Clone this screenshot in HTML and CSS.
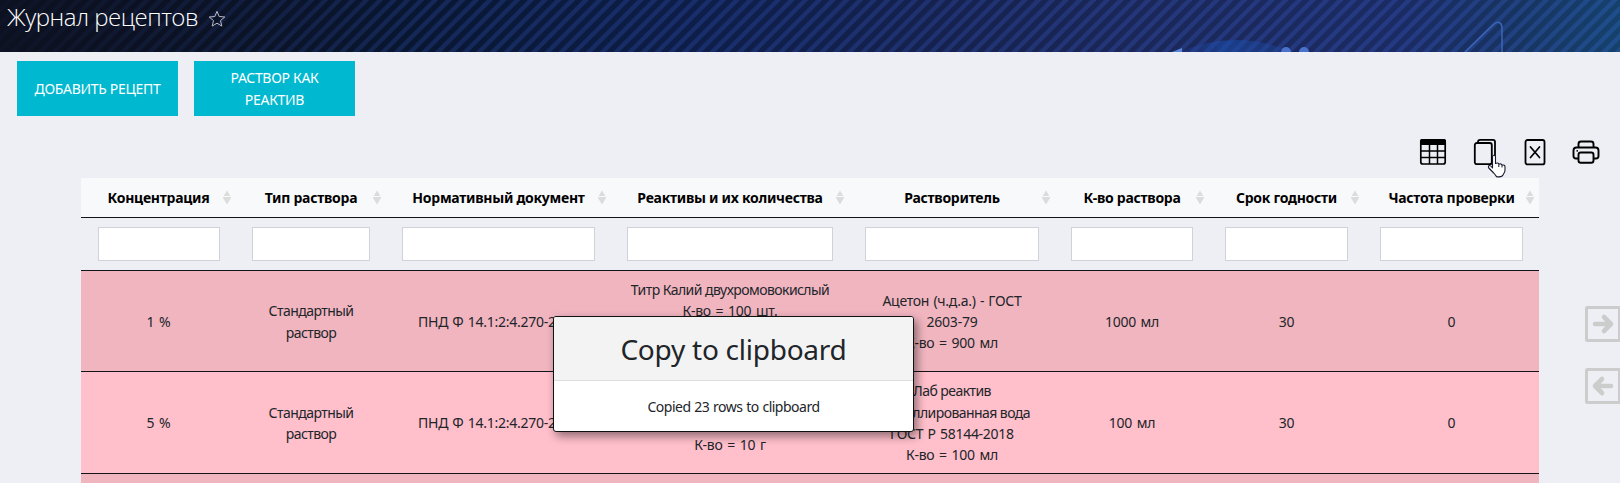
FILE: index.html
```html
<!DOCTYPE html>
<html lang="ru">
<head>
<meta charset="utf-8">
<title>Журнал рецептов</title>
<link rel="stylesheet" href="styles.css">
</head>
<body>
<header class="banner">
  <svg class="banner-art" width="1620" height="52" viewBox="0 0 1620 52">
    <defs>
      <linearGradient id="dome" x1="0" x2="1"><stop offset="0" stop-color="#2448a8" stop-opacity=".2"/><stop offset=".4" stop-color="#1a50b0" stop-opacity=".55"/><stop offset="1" stop-color="#1f4da6" stop-opacity=".25"/></linearGradient>
    </defs>
    <path d="M1180 52q56-24 112 0z" fill="url(#dome)"/>
    <path d="M1172 52l10-4v4z" fill="#5a86d8"/>
    <path d="M1281 52a5 5 0 0 1 10 0zM1299 52a5 5 0 0 1 10 0z" fill="#4a72cc"/>
    <path d="M1465 52l28-27q4-4 7-2q2 1 2 6v23" fill="none" stroke="#3c66b8" stroke-width="1.5"/>
  </svg>
  <h1 class="title">Журнал рецептов</h1>
  <svg class="star" width="18" height="18" viewBox="0 0 18 18"><path d="M9 1.300l2.200 5.200 5.600.5-4.300 3.600 1.300 5.500L9 13.200l-4.800 2.900 1.300-5.500L1.200 7l5.600-.5z" fill="none" stroke="#b9bcc6" stroke-width="1"/></svg>
</header>
<main class="page">
  <div class="actions">
    <button class="action">ДОБАВИТЬ РЕЦЕПТ</button>
    <button class="action">РАСТВОР КАК<br>РЕАКТИВ</button>
  </div>
  <div class="tools">
    <svg width="28" height="28" viewBox="0 0 28 28"><rect x="1.800" y="1.800" width="24.400" height="24.200" rx="2" fill="none" stroke="#000" stroke-width="1.700"/><path d="M1 6V3q0-2 2-2h22q2 0 2 2v4H1z"/><path d="M2 13h24M2 19.500h24M10.500 6v20M18.500 6v20" stroke="#000" stroke-width="1.500"/></svg>
    <svg width="24" height="28" viewBox="0 0 24 28"><rect x="1.800" y="5" width="17" height="21.200" rx="2" fill="none" stroke="#000" stroke-width="1.800"/><path d="M5 4q0-2.200 2.200-2.200H20q2 0 2 2v17q0 2-2.500 2" fill="none" stroke="#000" stroke-width="1.800"/></svg>
    <svg width="22" height="28" viewBox="0 0 22 28"><rect x="1.500" y="2" width="19" height="24.400" rx="2" fill="none" stroke="#000" stroke-width="1.800"/><path d="M6.500 9l9 10.500M15.500 9l-9 10.500" stroke="#000" stroke-width="1.700" stroke-linecap="round"/></svg>
    <svg width="28" height="28" viewBox="0 0 28 28"><path d="M6.500 9V6q0-2.500 2.500-2.500h10q2.500 0 2.500 2.500V9M6.500 20.500H4q-2.500 0-2.500-2.500V12.500Q1.500 9.500 4.500 9.500h19q3 0 3 3V18q0 2.500-2.500 2.500h-2.500" fill="none" stroke="#000" stroke-width="1.900"/><rect x="6.500" y="14.500" width="15" height="10.200" rx="2.300" fill="none" stroke="#000" stroke-width="1.900"/><circle cx="5.200" cy="12.800" r=".9"/></svg>
  </div>
  <div class="grid">
    <div class="row head">
      <div class="th"><span>Концентрация</span><i class="sort"></i></div>
      <div class="th"><span>Тип раствора</span><i class="sort"></i></div>
      <div class="th"><span>Нормативный документ</span><i class="sort"></i></div>
      <div class="th"><span>Реактивы и их количества</span><i class="sort"></i></div>
      <div class="th"><span>Растворитель</span><i class="sort"></i></div>
      <div class="th"><span>К-во раствора</span><i class="sort"></i></div>
      <div class="th"><span>Срок годности</span><i class="sort"></i></div>
      <div class="th"><span>Частота проверки</span><i class="sort"></i></div>
    </div>
    <div class="row filters">
      <input><input><input><input><input><input><input><input>
    </div>
    <div class="row data odd">
      <div class="num">1 %</div>
      <div>Стандартный<br>раствор</div>
      <div class="code">ПНД Ф 14.1:2:4.270-2012</div>
      <div>Титр Калий двухромовокислый<br><span class="num">К-во = 100 шт.</span><br>&nbsp;<br>&nbsp;</div>
      <div><span class="code">Ацетон (ч.д.а.) - ГОСТ</span><br><span class="num">2603-79</span><br><span class="num">К-во = 900 мл</span></div>
      <div class="num">1000 мл</div>
      <div class="num">30</div>
      <div class="num">0</div>
    </div>
    <div class="row data tall">
      <div class="num">5 %</div>
      <div>Стандартный<br>раствор</div>
      <div class="code">ПНД Ф 14.1:2:4.270-2012</div>
      <div>&nbsp;<br>&nbsp;<br><span class="num">К-во = 10 г</span></div>
      <div>Лаб реактив<br>Дистиллированная вода<br><span class="code">ГОСТ Р 58144-2018</span><br><span class="num">К-во = 100 мл</span></div>
      <div class="num">100 мл</div>
      <div class="num">30</div>
      <div class="num">0</div>
    </div>
    <div class="row next odd"></div>
  </div>
</main>
<nav class="pager">
  <svg width="35" height="36" viewBox="0 0 35 36"><rect x="1.500" y="1.500" width="33" height="33" rx="1" fill="none" stroke="#ccc" stroke-width="3"/><path d="M10 18h15M19 11l7 7-7 7" fill="none" stroke="#ccc" stroke-width="4.600" stroke-linecap="round" stroke-linejoin="round"/></svg>
  <svg width="35" height="36" viewBox="0 0 35 36"><rect x="1.500" y="1.500" width="33" height="33" rx="1" fill="none" stroke="#ccc" stroke-width="3"/><path d="M26 18H11M17 11l-7 7 7 7" fill="none" stroke="#ccc" stroke-width="4.600" stroke-linecap="round" stroke-linejoin="round"/></svg>
</nav>
<section class="toast">
  <h2>Copy to clipboard</h2>
  <p>Copied 23 rows to clipboard</p>
</section>
<svg class="cursor" width="20" height="25" viewBox="0 0 20 25"><path d="M5.500 14V3q0-1.800 1.500-1.800T8.500 3v6.500q2.800-1.300 3.300.7 2.700-.9 3.200.9 3-.6 3 1.600V16q0 2-1.200 3.500-.8 1.200-1.300 2.300-2.500 1.700-6 .8-1.200-1.800-2.800-3.600L1.800 14q-1-2 .4-2.400 1.300-.4 3.300 2.400z" fill="#fff" stroke="#15182c" stroke-width="1.100" stroke-linejoin="round"/><path d="M11.800 10.500v2.500M15 11.300V13.500" stroke="#15182c"/></svg>
</body>
</html>
```
FILE: styles.css
```css
* { box-sizing: border-box; }
body {
  position: relative;
  margin: 0;
  width: 1620px;
  height: 483px;
  overflow: hidden;
  background: #eeeff4;
  color: #212529;
  font: 14px/21.330px "Noto Sans", "Open Sans", sans-serif;
}
.banner {
  position: relative;
  display: flex;
  gap: 10px;
  height: 52px;
  padding-left: 7px;
  background:
    linear-gradient(90deg, rgba(13, 17, 32, .85) 0, rgba(13, 17, 40, 0) 420px),
    repeating-linear-gradient(135deg, rgba(0, 10, 20, .14) 0 4px, rgba(50, 90, 190, .24) 5.500px 8.500px, rgba(0, 10, 20, .14) 9.700px),
    linear-gradient(90deg, #0c1224 0, #0a1836 400px, #102152 700px, #192558 950px, #1f2c65 1150px, #1f3070 1400px, #1b3b6e 1520px, #194a7c 1620px);
}
.banner-art { position: absolute; left: 0; top: 0; }
.title {
  position: relative;
  margin: 0;
  color: #fff;
  font: 300 24px/34px "Open Sans", "Noto Sans", sans-serif;
  letter-spacing: -.5px;
}
.star { position: relative; margin-top: 10px; }
.page { display: flex; flex-direction: column; }
.actions { display: flex; gap: 16px; padding: 9px 17px 0; }
.action {
  width: 161px;
  height: 55px;
  padding: 0;
  border: 0;
  background: #00b8cf;
  color: #fff;
  font: 14px/22px "Noto Sans", sans-serif;
  letter-spacing: -.3px;
}
.tools {
  display: flex;
  justify-content: flex-end;
  gap: 26.500px;
  height: 28px;
  margin-top: 22px;
  padding-right: 20px;
}
.grid { width: 1458px; margin: 12px 0 0 81px; }
.row {
  display: grid;
  grid-template-columns: 155px 150px 225px 238px 206px 154px 155px 175px;
  align-items: center;
  border-bottom: 1px solid #111418;
}
.head { height: 40px; background: #f8f9fb; color: #000; font-weight: 700; letter-spacing: -.27px; }
.th { display: grid; grid-template-columns: 13px 1fr 13px; align-items: center; text-align: center; white-space: nowrap; }
.th span { grid-column: 2; justify-self: center; }
.sort {
  width: 8px;
  height: 14px;
  background: linear-gradient(#dcdcdc 6px, transparent 6px 7px, #dcdcdc 7px);
  clip-path: polygon(50% 0, 100% 46%, 100% 54%, 50% 100%, 0 54%, 0 46%);
}
.filters { height: 53px; }
.filters input { width: auto; min-width: 0; height: 34px; margin: 0 16px; border: 1px solid #ced2d9; background: #fff; }
.filters input:first-child { margin-left: 17px; }
.data { height: 101px; padding-top: 1px; background: #ffbfcb; text-align: center; white-space: nowrap; letter-spacing: -.56px; }
.tall { height: 102px; }
.next { height: 9px; border: 0; }
.odd { background: #f1b5c0; }
.num { letter-spacing: -.25px; word-spacing: 1.300px; }
.code { letter-spacing: -.26px; word-spacing: .8px; }
.pager { position: absolute; left: 1585px; top: 306px; display: grid; gap: 26px; }
.toast {
  position: absolute;
  left: 553px;
  top: 316px;
  width: 361px;
  height: 116px;
  border: 1px solid #111;
  border-radius: 3px;
  overflow: hidden;
  background: #fff;
  box-shadow: 3px 4px 10px rgba(0, 0, 0, .45);
  text-align: center;
}
.toast h2 { height: 64px; margin: 0; border-bottom: 1px solid #ddd; background: #f3f3f3; font-size: 28px; font-weight: 400; line-height: 64px; letter-spacing: -.25px; }
.toast p { margin: 0; line-height: 52px; letter-spacing: -.5px; word-spacing: .6px; }
.cursor { position: absolute; left: 1487px; top: 154px; }
```
